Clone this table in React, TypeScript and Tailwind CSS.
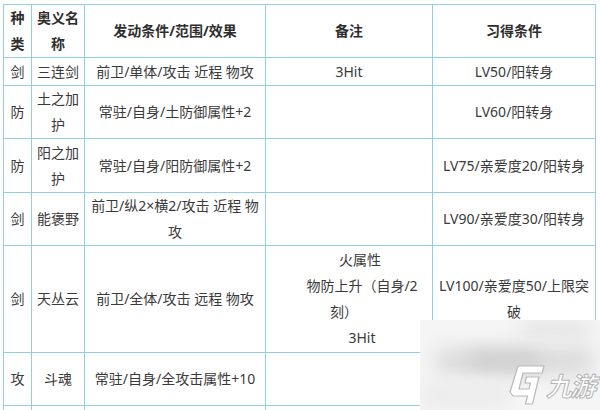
import React from 'react';

type Line = { text: string; shift?: string };

interface Row {
  kind: string;
  name: string[];
  effect: string[];
  note: Line[];
  learn: string[];
}

const rows: Row[] = [
  { kind: '剑', name: ['三连剑'], effect: ['前卫/单体/攻击 近程 物攻'], note: [{ text: '3Hit' }], learn: ['LV50/阳转身'] },
  { kind: '防', name: ['土之加', '护'], effect: ['常驻/自身/土防御属性+2'], note: [], learn: ['LV60/阳转身'] },
  { kind: '防', name: ['阳之加', '护'], effect: ['常驻/自身/阳防御属性+2'], note: [], learn: ['LV75/亲爱度20/阳转身'] },
  { kind: '剑', name: ['能褒野'], effect: ['前卫/纵2×横2/攻击 近程 物', '攻'], note: [], learn: ['LV90/亲爱度30/阳转身'] },
  {
    kind: '剑',
    name: ['天丛云'],
    effect: ['前卫/全体/攻击 远程 物攻'],
    note: [
      { text: '火属性', shift: 'pl-[22px]' },
      { text: '物防上升（自身/2', shift: 'pl-[26px]' },
      { text: '刻）', shift: 'pr-[10px]' },
      { text: '3Hit', shift: 'pl-[26px]' },
    ],
    learn: ['LV100/亲爱度50/上限突', '破'],
  },
  { kind: '攻', name: ['斗魂'], effect: ['常驻/自身/全攻击属性+10'], note: [], learn: [] },
];

const Cell: React.FC<{ lines: Line[]; bold?: boolean }> = ({ lines, bold }) => (
  <div
    className={`bg-white flex flex-col items-center justify-center text-center text-[14px] leading-[26px] whitespace-nowrap ${
      bold ? 'font-bold text-[#2e2e2e]' : 'text-[#3a3a3a]'
    }`}
  >
    {lines.map((l, i) => (
      <span key={i} className={`block ${l.shift ?? ''}`}>
        {l.text}
      </span>
    ))}
  </div>
);

const toLines = (arr: string[]): Line[] => arr.map((text) => ({ text }));

const JiuyouMark = () => (
  <div className="absolute left-[420px] top-[320px] w-[180px] h-[90px] bg-[#f5f5f5] overflow-hidden">
    {/* blurred backdrop */}
    <div className="absolute left-[15px] top-[28px] w-[160px] h-[26px] rounded-full bg-[#d9d9d9] blur-[10px]" />
    <div className="absolute left-[50px] top-[32px] w-[70px] h-[18px] rounded-full bg-[#cfcfcf] blur-[8px]" />
    <div className="absolute left-[100px] top-[0px] w-[70px] h-[20px] rounded-full bg-[#e6e6e6] blur-[8px]" />
    <div className="absolute left-[0px] top-[62px] w-[90px] h-[28px] rounded-full bg-[#ececec] blur-[8px]" />
    {/* logo */}
    <div className="absolute left-[89px] top-[45px] flex items-center gap-[1px] whitespace-nowrap">
      <svg width="36" height="40" viewBox="0 0 36 40" className="shrink-0">
        <path
          d="M9 1 L35 1 L33 8 L14 8 L10 24 L20 24 L21.5 18 L16 18 L17.5 12 L30 12 L23.5 39 L16.5 39 L18.5 31 L4 31 L1 27 Z"
          fill="#ffffff"
          stroke="#b9b9b9"
          strokeWidth="1.2"
          strokeLinejoin="miter"
        />
      </svg>
      <span className="shrink-0 text-[26px] leading-[30px] font-bold italic text-white tracking-[-2px] [-webkit-text-stroke:1px_#b5b5b5] [font-family:'Noto_Sans_CJK_SC',sans-serif]">
        九游
      </span>
    </div>
  </div>
);

export default function App() {
  return (
    <div className="relative w-[600px] h-[410px] overflow-hidden bg-white [font-family:'Noto_Sans','Noto_Sans_CJK_SC',sans-serif]">
      <div className="ml-[3px] mt-[4px] w-[593px] grid grid-cols-[27px_52px_180px_166px_162px] grid-rows-[52px_27px_52px_53px_52px_106px_52px_40px] gap-px p-px bg-[#8fd0e5]">
        <Cell bold lines={toLines(['种', '类'])} />
        <Cell bold lines={toLines(['奥义名', '称'])} />
        <Cell bold lines={toLines(['发动条件/范围/效果'])} />
        <Cell bold lines={toLines(['备注'])} />
        <Cell bold lines={toLines(['习得条件'])} />
        {rows.map((r, i) => (
          <React.Fragment key={i}>
            <Cell lines={toLines([r.kind])} />
            <Cell lines={toLines(r.name)} />
            <Cell lines={toLines(r.effect)} />
            <Cell lines={r.note} />
            <Cell lines={toLines(r.learn)} />
          </React.Fragment>
        ))}
        <div className="bg-white" />
        <div className="bg-white" />
        <div className="bg-white" />
        <div className="bg-white" />
        <div className="bg-white" />
      </div>
      <JiuyouMark />
    </div>
  );
}
